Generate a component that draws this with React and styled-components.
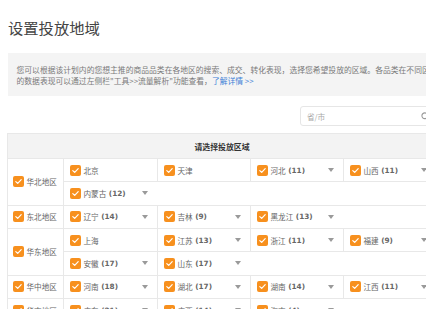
import React from "react";
import styled, { createGlobalStyle } from "styled-components";

const GlobalStyle = createGlobalStyle`
  html, body { margin: 0; padding: 0; background: #fff; overflow: hidden; }
  body { font-family: "Noto Sans CJK SC", "Noto Sans", sans-serif; }
  * { box-sizing: border-box; }
`;

const Page = styled.div`
  width: 440px;
  padding-left: 7px;
`;

const Title = styled.h1`
  margin: 0;
  padding-top: 17px;
  font-size: 15.3px;
  line-height: 21px;
  font-weight: normal;
  color: #444;
  padding-left: 1px;
`;

const Notice = styled.div`
  margin-top: 15px;
  margin-left: 1px;
  background: #f4f4f4;
  padding: 12px 8px 10px 8.5px;
  font-size: 7.8px;
  line-height: 10.5px;
  color: #7a7a7a;
  white-space: nowrap;
`;

const Link = styled.a`
  color: #3d7fd6;
  text-decoration: none;
`;

const SearchRow = styled.div`
  display: flex;
  justify-content: flex-end;
  margin-top: 10px;
`;

const SearchBox = styled.div`
  width: 140px;
  height: 20px;
  border: 1px solid #e6e6e6;
  border-radius: 3px;
  display: flex;
  align-items: center;
  padding: 0 9px 0 6px;
  font-size: 7.6px;
  color: #aaa;
`;

const SearchIcon = styled.svg`
  margin-left: auto;
  flex: none;
`;

const Table = styled.div`
  margin-top: 7px;
  border-left: 1px solid #e8e8e8;
  border-top: 1px solid #e8e8e8;
  width: 429px;
`;

const Header = styled.div`
  height: 25px;
  background: #f3f3f3;
  border-bottom: 1px solid #e8e8e8;
  display: flex;
  align-items: center;
  justify-content: center;
  font-size: 7.9px;
  font-weight: bold;
  color: #333;
`;

const RegionRow = styled.div`
  display: flex;
`;

const RegionCell = styled.div`
  width: 56px;
  flex: none;
  display: flex;
  align-items: center;
  padding-left: 5px;
  border-right: 1px solid #e8e8e8;
  border-bottom: 1px solid #e8e8e8;
  font-size: 7.6px;
  color: #666;
`;

const Provinces = styled.div`
  flex: 1;
  display: flex;
  flex-direction: column;
`;

const SubRow = styled.div`
  height: 23.33px;
  display: flex;
  border-bottom: 1px solid #e8e8e8;
`;

const Province = styled.div`
  width: 93px;
  flex: none;
  display: flex;
  align-items: center;
  padding: 0 9px 0 6px;
  font-size: 7.6px;
  color: #666;
  & + & {
    border-left: 1px solid #e8e8e8;
  }
`;

const Label = styled.span`
  margin-left: 2.5px;
  white-space: nowrap;
`;

const Count = styled.b`
  font-weight: bold;
  margin-left: 2.5px;
  font-family: "DejaVu Sans", sans-serif;
  font-size: 7.3px;
  color: #666;
`;

const Caret = styled.span`
  margin-left: auto;
  width: 0;
  height: 0;
  border-left: 3.5px solid transparent;
  border-right: 3.5px solid transparent;
  border-top: 4px solid #9a9a9a;
`;

const Box = styled.span`
  width: 11px;
  height: 11px;
  flex: none;
  border-radius: 2px;
  background: #f7901e;
  display: inline-flex;
  align-items: center;
  justify-content: center;
`;

function Check() {
  return (
    <Box>
      <svg width="9" height="9" viewBox="0 0 9 9">
        <path d="M1.8 4.6 L3.7 6.4 L7.2 2.7" fill="none" stroke="#fff" strokeWidth="1.2" strokeLinecap="round" strokeLinejoin="round" />
      </svg>
    </Box>
  );
}

const regions = [
  { name: "华北地区", rows: [[["北京"], ["天津"], ["河北", 11], ["山西", 11]], [["内蒙古", 12]]] },
  { name: "东北地区", rows: [[["辽宁", 14], ["吉林", 9], ["黑龙江", 13]]] },
  { name: "华东地区", rows: [[["上海"], ["江苏", 13], ["浙江", 11], ["福建", 9]], [["安徽", 17], ["山东", 17]]] },
  { name: "华中地区", rows: [[["河南", 18], ["湖北", 17], ["湖南", 14], ["江西", 11]]] },
  { name: "华南地区", rows: [[["广东", 21], ["广西", 14], ["海南", 4]]] },
];

export default function App() {
  return (
    <>
      <GlobalStyle />
      <Page>
        <Title>设置投放地域</Title>
        <Notice>
          您可以根据该计划内的您想主推的商品品类在各地区的搜索、成交、转化表现，选择您希望投放的区域。各品类在不同区域
          <br />
          的数据表现可以通过左侧栏"工具&gt;&gt;流量解析"功能查看，<Link>了解详情 &gt;&gt;</Link>
        </Notice>
        <SearchRow>
          <SearchBox>
            省/市
            <SearchIcon width="9" height="9" viewBox="0 0 10 10">
              <circle cx="4.2" cy="4.2" r="3.2" fill="none" stroke="#999" strokeWidth="1.2" />
              <path d="M6.6 6.6 L9 9" stroke="#999" strokeWidth="1.3" strokeLinecap="round" />
            </SearchIcon>
          </SearchBox>
        </SearchRow>
        <Table>
          <Header>请选择投放区域</Header>
          {regions.map((r) => (
            <RegionRow key={r.name}>
              <RegionCell>
                <Check />
                <Label>{r.name}</Label>
              </RegionCell>
              <Provinces>
                {r.rows.map((row, i) => (
                  <SubRow key={i}>
                    {row.map(([p, c]) => (
                      <Province key={p}>
                        <Check />
                        <Label>{p}</Label>
                        {c !== undefined && <Count>({c})</Count>}
                        {c !== undefined && <Caret />}
                      </Province>
                    ))}
                  </SubRow>
                ))}
              </Provinces>
            </RegionRow>
          ))}
        </Table>
      </Page>
    </>
  );
}
